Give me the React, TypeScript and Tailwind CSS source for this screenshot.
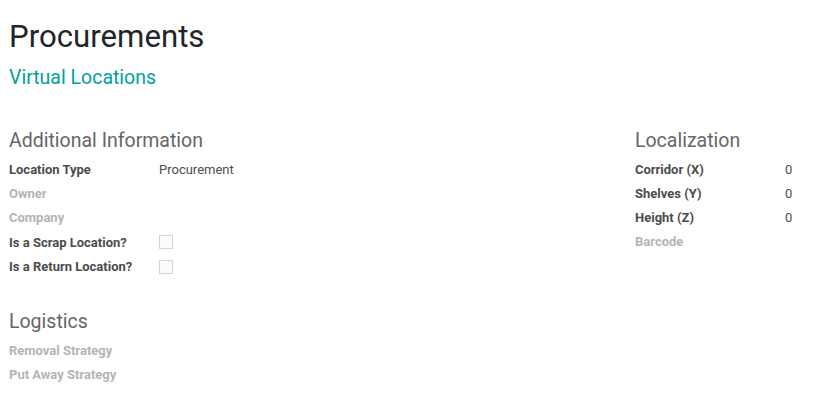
const Row = ({
  label,
  value,
  muted,
  checkbox,
}: {
  label: string;
  value?: string;
  muted?: boolean;
  checkbox?: boolean;
}) => (
  <div className={`flex items-center ${checkbox ? "h-[24.5px]" : "h-[24px]"}`}>
    <div
      className={`w-[150px] shrink-0 text-[13px] font-bold ${
        muted ? "text-[#b4b4b4]" : "text-[#4c4c4c]"
      }`}
    >
      {label}
    </div>
    {checkbox ? (
      <span className="block h-[14px] w-[14px] border border-[#d4d4d4] bg-[#fbfdfb]" />
    ) : (
      <div className="text-[13px] text-[#4c4c4c]">{value}</div>
    )}
  </div>
);

export default function App() {
  return (
    <div
      className="h-[403px] w-[813px] overflow-hidden bg-white pl-[9px]"
      style={{ fontFamily: "Roboto, 'Noto Sans', sans-serif" }}
    >
      <h1 className="mt-[19px] text-[31.2px] leading-[36px] text-[#212529]">
        Procurements
      </h1>
      <h2 className="mt-[9px] text-[19.5px] leading-[28px] text-[#00a09d]">
        Virtual Locations
      </h2>

      <div className="mt-[35px] flex">
        <div className="w-[626px] shrink-0">
          <div className="text-[19.5px] leading-[28px] text-[#666666]">
            Additional Information
          </div>
          <div className="mt-[3px]">
            <Row label="Location Type" value="Procurement" />
            <Row label="Owner" muted />
            <Row label="Company" muted />
            <Row label="Is a Scrap Location?" checkbox />
            <Row label="Is a Return Location?" checkbox />
          </div>

          <div className="mt-[29px] text-[19.5px] leading-[28px] text-[#666666]">
            Logistics
          </div>
          <div className="mt-[3px]">
            <Row label="Removal Strategy" muted />
            <Row label="Put Away Strategy" muted />
          </div>
        </div>

        <div className="flex-1">
          <div className="text-[19.5px] leading-[28px] text-[#666666]">
            Localization
          </div>
          <div className="mt-[3px]">
            <Row label="Corridor (X)" value="0" />
            <Row label="Shelves (Y)" value="0" />
            <Row label="Height (Z)" value="0" />
            <Row label="Barcode" muted />
          </div>
        </div>
      </div>
    </div>
  );
}
